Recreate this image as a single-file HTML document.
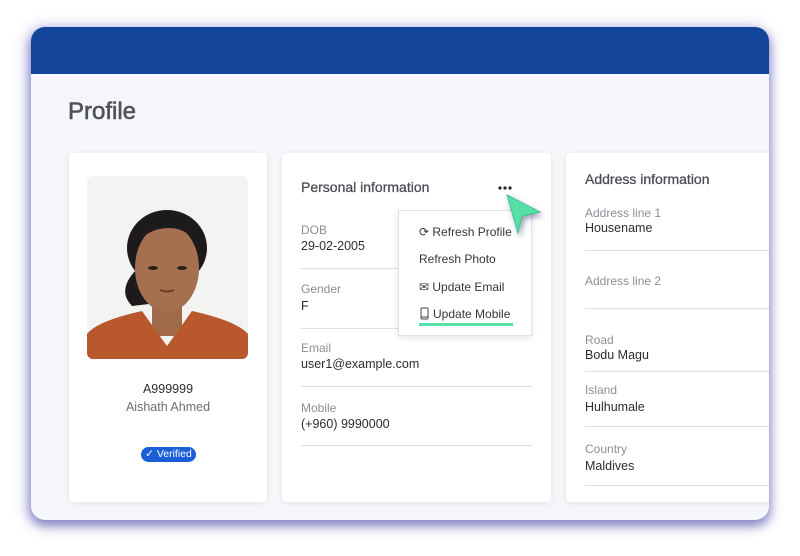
<!DOCTYPE html>
<html><head><meta charset="utf-8"><style>
*{box-sizing:border-box;margin:0;padding:0}
body{width:800px;height:556px;background:#fff;font-family:"Liberation Sans",sans-serif;position:relative;overflow:hidden}
.win{position:absolute;left:31px;top:27px;width:738px;height:493px;border-radius:14px;background:#f5f6fa;overflow:hidden;box-shadow:0 5px 10px 1px rgba(80,80,170,.6),-2px 2px 16px rgba(110,110,200,.45)}
.hdr{position:absolute;left:0;top:0;width:100%;height:47px;background:#12459a}
h1{position:absolute;left:37px;top:71px;font-size:24px;font-weight:normal;color:#4f525a;-webkit-text-stroke:0.6px #4f525a}
.card{position:absolute;top:126px;height:349px;background:#fff;border-radius:4px;box-shadow:0 1px 6px rgba(0,0,0,.08)}
.t{position:absolute;font-size:14px;color:#4a4d55;-webkit-text-stroke:0.3px #4a4d55}
.l{position:absolute;font-size:12px;color:#8a8e97}
.v{position:absolute;font-size:12.5px;color:#2b2d33}
.hr{position:absolute;height:1px;background:#dcdde2}
.menu{position:absolute;left:398px;top:210px;width:134px;height:126px;background:#fff;border:1px solid #e0e1e5;box-shadow:0 2px 6px rgba(0,0,0,.1)}
.mi{position:absolute;left:20px;font-size:12px;color:#33353b}
</style></head><body>
<div class="win">
<div class="hdr"></div>
<h1>Profile</h1>
<div class="card" style="left:38px;width:198px">
<svg style="position:absolute;left:18px;top:23px" width="161" height="183" viewBox="0 0 161 183">
<defs><clipPath id="c"><rect width="161" height="183" rx="6"/></clipPath></defs>
<g clip-path="url(#c)">
<rect width="161" height="183" fill="#f3f3f2"/>
<path d="M48 95 Q30 115 45 130 L62 128 Z" fill="#1c1a1a"/>
<ellipse cx="80" cy="72" rx="40" ry="38" fill="#1c1a1a"/>
<rect x="65" y="125" width="30" height="35" fill="#a06a4a"/>
<ellipse cx="80" cy="92" rx="32" ry="44" fill="#a5704f"/>
<path d="M46 74 Q52 35 80 38 Q112 40 114 76 Q104 52 82 52 Q58 52 46 74Z" fill="#1c1a1a"/>
<path d="M0 183 L0 158 Q10 145 55 135 L80 170 L105 135 Q150 145 161 158 L161 183Z" fill="#b9582c"/>
<ellipse cx="66" cy="92" rx="5" ry="2" fill="#2a1f1a"/><ellipse cx="95" cy="92" rx="5" ry="2" fill="#2a1f1a"/>
<path d="M73 114 Q80 117 87 114" stroke="#6e3a2c" stroke-width="2" fill="none"/>
</g></svg>
<div style="position:absolute;left:0;width:198px;top:229px;text-align:center;font-size:12.5px;color:#2b2d33">A999999</div>
<div style="position:absolute;left:0;width:198px;top:247px;text-align:center;font-size:12.5px;color:#6b6f78">Aishath Ahmed</div>
<div style="position:absolute;left:72px;top:294px;width:55px;height:15px;border-radius:8px;background:#1b5ed8;color:#fff;font-size:10.5px;line-height:15px;text-align:center">✓ Verified</div>
</div>
<div class="card" style="left:251px;width:269px">
<div class="t" style="left:19px;top:26px">Personal information</div>
<svg style="position:absolute;left:216px;top:33px" width="14" height="4"><circle cx="2" cy="2" r="1.6" fill="#222"/><circle cx="7" cy="2" r="1.6" fill="#222"/><circle cx="12" cy="2" r="1.6" fill="#222"/></svg>
<div class="l" style="left:19px;top:70px">DOB</div><div class="v" style="left:19px;top:86px">29-02-2005</div>
<div class="hr" style="left:19px;top:115px;width:231px"></div>
<div class="l" style="left:19px;top:129px">Gender</div><div class="v" style="left:19px;top:146px">F</div>
<div class="hr" style="left:19px;top:175px;width:231px"></div>
<div class="l" style="left:19px;top:188px">Email</div><div class="v" style="left:19px;top:204px">user1@example.com</div>
<div class="hr" style="left:19px;top:233px;width:231px"></div>
<div class="l" style="left:19px;top:248px">Mobile</div><div class="v" style="left:19px;top:264px">(+960) 9990000</div>
<div class="hr" style="left:19px;top:292px;width:231px"></div>
</div>
<div class="card" style="left:535px;width:220px">
<div class="t" style="left:19px;top:18px">Address information</div>
<div class="l" style="left:19px;top:53px">Address line 1</div><div class="v" style="left:19px;top:68px">Housename</div>
<div class="hr" style="left:19px;top:97px;width:201px"></div>
<div class="l" style="left:19px;top:121px">Address line 2</div>
<div class="hr" style="left:19px;top:155px;width:201px"></div>
<div class="l" style="left:19px;top:180px">Road</div><div class="v" style="left:19px;top:195px">Bodu Magu</div>
<div class="hr" style="left:19px;top:218px;width:201px"></div>
<div class="l" style="left:19px;top:230px">Island</div><div class="v" style="left:19px;top:247px">Hulhumale</div>
<div class="hr" style="left:19px;top:273px;width:201px"></div>
<div class="l" style="left:19px;top:289px">Country</div><div class="v" style="left:19px;top:306px">Maldives</div>
<div class="hr" style="left:19px;top:332px;width:201px"></div>
</div>
</div>
<div class="menu">
<div class="mi" style="top:14px">⟳ Refresh Profile</div>
<div class="mi" style="top:41px">Refresh Photo</div>
<div class="mi" style="top:69px">✉ Update Email</div>
<svg style="position:absolute;left:21px;top:96px" width="10" height="14"><rect x="1" y="1" width="7" height="11" rx="1" fill="none" stroke="#444" stroke-width="1"/><line x1="1" y1="10" x2="8" y2="10" stroke="#444"/></svg>
<div class="mi" style="top:96px;left:34px">Update Mobile</div>
<div style="position:absolute;left:20px;top:112px;width:94px;height:3px;background:#56e0a8"></div>
</div>
<svg style="position:absolute;left:500px;top:188px" width="50" height="50" viewBox="0 0 50 50">
<path d="M7 7 L40 24 L22 28 L18 45 Z" fill="#56e0a8" stroke="#3fc693" stroke-width="1" style="filter:drop-shadow(2px 3px 3px rgba(40,40,100,.45))"/>
</svg>
</body></html>
